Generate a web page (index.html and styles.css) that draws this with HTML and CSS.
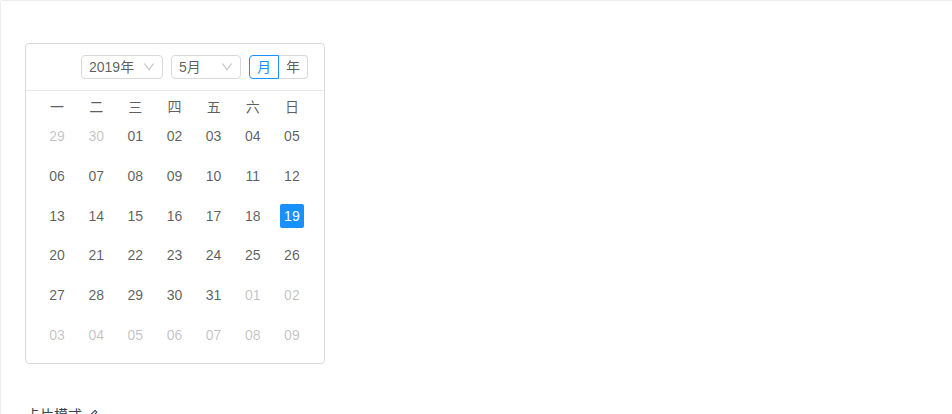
FILE: index.html
```html
<!DOCTYPE html>
<html lang="zh-CN">
<head>
<meta charset="utf-8">
<title>卡片模式</title>
<link rel="stylesheet" href="styles.css">
</head>
<body>
<section class="code-box">
  <div class="demo">
    <div class="calendar">
      <div class="cal-header">
        <div class="select select-year">
          <span class="select-value">2019年</span>
          <svg class="arrow" viewBox="64 64 896 896" width="12" height="12"><path d="M884 256h-75c-5.1 0-9.9 2.5-12.9 6.6L512 654.2 227.9 262.6c-3-4.1-7.8-6.6-12.9-6.6h-75c-6.5 0-10.3 7.4-6.5 12.7l352.6 486.1c12.8 17.6 39 17.6 51.7 0l352.6-486.1c3.9-5.3.1-12.7-6.4-12.7z"/></svg>
        </div>
        <div class="select select-month">
          <span class="select-value">5月</span>
          <svg class="arrow" viewBox="64 64 896 896" width="12" height="12"><path d="M884 256h-75c-5.1 0-9.9 2.5-12.9 6.6L512 654.2 227.9 262.6c-3-4.1-7.8-6.6-12.9-6.6h-75c-6.5 0-10.3 7.4-6.5 12.7l352.6 486.1c12.8 17.6 39 17.6 51.7 0l352.6-486.1c3.9-5.3.1-12.7-6.4-12.7z"/></svg>
        </div>
        <div class="radio-group">
          <span class="radio-btn checked">月</span>
          <span class="radio-btn">年</span>
        </div>
      </div>
      <div class="cal-body">
        <div class="cal-grid">
          <div class="wd">一</div><div class="wd">二</div><div class="wd">三</div><div class="wd">四</div><div class="wd">五</div><div class="wd">六</div><div class="wd">日</div>

          <div class="cell other"><span class="date">29</span></div>
          <div class="cell other"><span class="date">30</span></div>
          <div class="cell"><span class="date">01</span></div>
          <div class="cell"><span class="date">02</span></div>
          <div class="cell"><span class="date">03</span></div>
          <div class="cell"><span class="date">04</span></div>
          <div class="cell"><span class="date">05</span></div>

          <div class="cell"><span class="date">06</span></div>
          <div class="cell"><span class="date">07</span></div>
          <div class="cell"><span class="date">08</span></div>
          <div class="cell"><span class="date">09</span></div>
          <div class="cell"><span class="date">10</span></div>
          <div class="cell"><span class="date">11</span></div>
          <div class="cell"><span class="date">12</span></div>

          <div class="cell"><span class="date">13</span></div>
          <div class="cell"><span class="date">14</span></div>
          <div class="cell"><span class="date">15</span></div>
          <div class="cell"><span class="date">16</span></div>
          <div class="cell"><span class="date">17</span></div>
          <div class="cell"><span class="date">18</span></div>
          <div class="cell selected"><span class="date">19</span></div>

          <div class="cell"><span class="date">20</span></div>
          <div class="cell"><span class="date">21</span></div>
          <div class="cell"><span class="date">22</span></div>
          <div class="cell"><span class="date">23</span></div>
          <div class="cell"><span class="date">24</span></div>
          <div class="cell"><span class="date">25</span></div>
          <div class="cell"><span class="date">26</span></div>

          <div class="cell"><span class="date">27</span></div>
          <div class="cell"><span class="date">28</span></div>
          <div class="cell"><span class="date">29</span></div>
          <div class="cell"><span class="date">30</span></div>
          <div class="cell"><span class="date">31</span></div>
          <div class="cell other"><span class="date">01</span></div>
          <div class="cell other"><span class="date">02</span></div>

          <div class="cell other"><span class="date">03</span></div>
          <div class="cell other"><span class="date">04</span></div>
          <div class="cell other"><span class="date">05</span></div>
          <div class="cell other"><span class="date">06</span></div>
          <div class="cell other"><span class="date">07</span></div>
          <div class="cell other"><span class="date">08</span></div>
          <div class="cell other"><span class="date">09</span></div>
        </div>
      </div>
    </div>
  </div>
  <div class="meta">
    <div class="title">卡片模式
      <svg class="edit" viewBox="64 64 896 896" width="13" height="13"><path d="M257.7 752c2 0 4-.2 6-.5L431.9 722c2-.4 3.9-1.3 5.3-2.8l423.9-423.9a9.96 9.96 0 0 0 0-14.1L694.9 114.9c-1.9-1.9-4.4-2.9-7.1-2.9s-5.2 1-7.1 2.9L256.8 538.8c-1.5 1.5-2.4 3.3-2.8 5.3l-29.5 168.2a33.5 33.5 0 0 0 9.4 29.8c6.6 6.4 14.9 9.9 23.8 9.9zm67.4-174.4L687.8 215l73.3 73.3-362.7 362.6-88.9 15.7 15.6-89zM880 836H144c-17.7 0-32 14.3-32 32v36c0 4.4 3.6 8 8 8h784c4.4 0 8-3.6 8-8v-36c0-17.7-14.3-32-32-32z"/></svg>
    </div>
  </div>
</section>
</body>
</html>
```

FILE: styles.css
```css
html, body {
  margin: 0;
  padding: 0;
  overflow: hidden;
  background: #fff;
}

body {
  font-family: "Liberation Sans", Arial, "Noto Sans CJK SC", sans-serif;
  font-size: 14px;
  line-height: 1.5;
  color: rgba(0, 0, 0, 0.65);
}

.code-box {
  width: calc(100% + 20px);
  border: 1px solid #ebedf0;
  border-radius: 2px;
  box-sizing: border-box;
}

.demo {
  padding: 42px 24px 40px;
}

.calendar {
  width: 300px;
  border: 1px solid #d9d9d9;
  border-radius: 4px;
  box-sizing: border-box;
  background: #fff;
}

.cal-header {
  display: flex;
  justify-content: flex-end;
  align-items: center;
  padding: 11px 16px 11px 0;
  border-bottom: 1px solid #e8e8e8;
}

.select {
  position: relative;
  display: flex;
  align-items: center;
  height: 24px;
  box-sizing: border-box;
  border: 1px solid #d9d9d9;
  border-radius: 4px;
  padding: 0 7px;
  line-height: 22px;
}

.select-year {
  width: 82px;
}

.select-month {
  width: 70px;
  margin-left: 8px;
}

.select-value {
  flex: 1;
  color: rgba(0, 0, 0, 0.65);
  white-space: nowrap;
}

.arrow {
  fill: rgba(0, 0, 0, 0.25);
  flex: none;
}

.radio-group {
  display: flex;
  margin-left: 8px;
}

.radio-btn {
  height: 24px;
  box-sizing: border-box;
  line-height: 22px;
  padding: 0 7px;
  border: 1px solid #d9d9d9;
  color: rgba(0, 0, 0, 0.65);
}

.radio-btn:first-child {
  border-radius: 4px 0 0 4px;
}

.radio-btn:last-child {
  border-left: 0;
  border-radius: 0 4px 4px 0;
}

.radio-btn.checked {
  border-color: #1890ff;
  color: #1890ff;
}

.cal-body {
  padding: 8px 12.5px 8px 11.5px;
}

.cal-grid {
  display: grid;
  grid-template-columns: repeat(7, 1fr);
  grid-template-rows: 17px repeat(6, 1fr);
  height: 256px;
}

.wd {
  text-align: center;
  line-height: 17px;
  color: rgba(0, 0, 0, 0.65);
}

.cell {
  display: flex;
  align-items: center;
  justify-content: center;
}

.date {
  display: block;
  width: 24px;
  height: 24px;
  line-height: 24px;
  text-align: center;
  border-radius: 2px;
  color: rgba(0, 0, 0, 0.65);
}

.cell.other .date {
  color: rgba(0, 0, 0, 0.25);
}

.cell.selected .date {
  background: #1890ff;
  color: #fff;
}

.meta {
  padding: 0 24px;
}

.title {
  display: flex;
  align-items: center;
  gap: 4px;
  padding-left: 1px;
  line-height: 22px;
  color: #314659;
  font-size: 14px;
}

.edit {
  fill: #314659;
  flex: none;
}
```
